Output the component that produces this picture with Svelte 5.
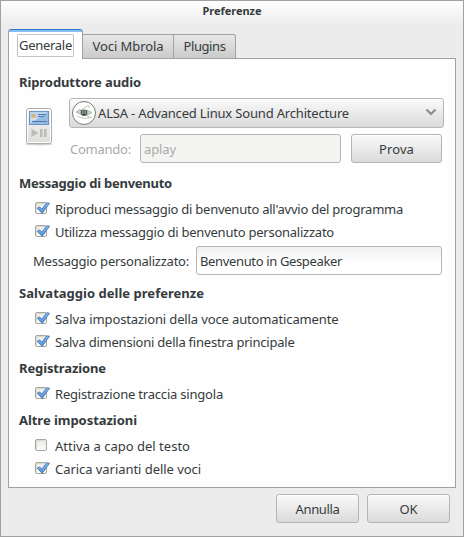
<script>
  const sections = [
    {
      title: 'Salvataggio delle preferenze', w: 185,
      items: [
        { label: 'Salva impostazioni della voce automaticamente', on: true, w: 283.5 },
        { label: 'Salva dimensioni della finestra principale', on: true, w: 239.5 }
      ]
    },
    {
      title: 'Registrazione', w: 87,
      items: [{ label: 'Registrazione traccia singola', on: true, w: 168 }]
    },
    {
      title: 'Altre impostazioni', w: 118,
      items: [
        { label: 'Attiva a capo del testo', on: false, w: 135 },
        { label: 'Carica varianti delle voci', on: true, w: 146 }
      ]
    }
  ];
  const welcome = [
    { label: "Riproduci messaggio di benvenuto all'avvio del programma", on: true, w: 348 },
    { label: 'Utilizza messaggio di benvenuto personalizzato', on: true, w: 279 }
  ];

  // Adjusts tracking so that a label occupies its allotted width.
  function track(node, width) {
    const natural = node.getBoundingClientRect().width;
    node.style.letterSpacing = `${(width - natural) / node.textContent.length}px`;
  }
</script>

{#snippet check(item)}
  <label class="check">
    <svg width="16" height="16" viewBox="0 0 16 16">
      <rect x="1.5" y="1.5" width="11" height="11" rx="1.5" fill="url(#box)" stroke="#a5a69d" />
      <path d="M2.5 11V3.5Q2.5 2.5 3.5 2.5H12" fill="none" stroke="#d9dad4" />
      {#if item.on}
        <path d="M3.2 7.2 5.6 5.9 7.9 8.2 12.7 1.8 15.5 2.2 8.2 12.4Z" fill="url(#tick)" stroke="#356ca9" stroke-width=".8" stroke-linejoin="round" />
      {/if}
    </svg>
    <span use:track={item.w}>{item.label}</span>
  </label>
{/snippet}

<svg class="defs" width="0" height="0">
  <defs>
    <linearGradient id="box" x2="0" y2="1"><stop stop-color="#e6e6e2" /><stop offset="1" stop-color="#fff" /></linearGradient>
    <linearGradient id="tick" x2="0" y2="1"><stop stop-color="#8abaf0" /><stop offset="1" stop-color="#5294dc" /></linearGradient>
  </defs>
</svg>

<div class="window">
  <header><span use:track={59}>Preferenze</span></header>
  <nav>
    <div class="tab active"><div class="focus"><span use:track={53}>Generale</span></div></div>
    <div class="tab voices"><span use:track={71}>Voci Mbrola</span></div>
    <div class="tab plugins"><span use:track={42}>Plugins</span></div>
  </nav>
  <main>
    <h2><span use:track={122}>Riproduttore audio</span></h2>
    <div class="audio">
      <svg class="player" width="30" height="40" viewBox="0 0 30 40">
        <defs>
          <linearGradient id="body" x2="0" y2="1"><stop stop-color="#f5f5f4" /><stop offset="1" stop-color="#dededc" /></linearGradient>
        </defs>
        <ellipse cx="15" cy="37" rx="14" ry="1.5" fill="#000" opacity=".18" />
        <rect x="2.5" y="1.5" width="25" height="35" rx="2.5" fill="url(#body)" stroke="#adafab" />
        <rect x="3.5" y="2.5" width="23" height="33" rx="1.5" fill="none" stroke="#fff" />
        <rect x="5.5" y="4.5" width="19" height="13" fill="#95bce5" stroke="#6c94c3" />
        <path d="M6 17V5H24Z" fill="#b9d5f1" />
        <path d="M7.5 7h4v3.5h-4z" fill="#d6b07a" /><path d="M7 11h5v2H7z" fill="#e5e1cc" />
        <path d="M14 7.5h8M14 9.5h6M8 14.5h15" stroke="#4c79ac" />
        <path d="M7.5 22v8l7-4zM16 22h2.5v8H16zM20 22h2.5v8H20z" fill="#babcb7" />
      </svg>
      <div class="controls">
        <div class="combo">
          <svg width="26" height="26" viewBox="0 0 26 26">
            <circle cx="13" cy="13" r="11.5" fill="#fff" stroke="#737a73" />
            <path d="M5 12Q12 7 21 12.5Q14 18 5 12Z" fill="#c5dbc5" stroke="#8ea594" stroke-width=".7" />
            <path d="M8 9Q13 15 20 18M6 16Q13 20 21 17M12 9Q19 3 18 8" fill="none" stroke="#a0aea1" stroke-width=".7" />
            <path d="M9.8 10.3h6.4v3.2Q15.5 16 13 16T9.8 13.5Z" fill="#4b554d" />
            <path d="M11.8 11v3M14.2 11v3" stroke="#d1ddd2" stroke-width=".8" />
          </svg>
          <span use:track={251}>ALSA - Advanced Linux Sound Architecture</span>
          <svg class="chev" width="12" height="10" viewBox="0 0 12 10"><path d="M1.5 1.5 6 6 10.5 1.5" fill="none" stroke="#8b8d89" stroke-width="2.2" /></svg>
        </div>
        <div class="command">
          <div class="dim"><span use:track={61}>Comando:</span></div>
          <div class="entry disabled"><span use:track={32}>aplay</span></div>
          <button class="test"><span use:track={35}>Prova</span></button>
        </div>
      </div>
    </div>

    <h2><span use:track={153}>Messaggio di benvenuto</span></h2>
    {#each welcome as item}{@render check(item)}{/each}
    <div class="custom">
      <div class="name"><span use:track={156}>Messaggio personalizzato:</span></div>
      <div class="entry"><span use:track={142}>Benvenuto in Gespeaker</span></div>
    </div>
    {#each sections as section}
      <h2><span use:track={section.w}>{section.title}</span></h2>
      {#each section.items as item}{@render check(item)}{/each}
    {/each}
  </main>
  <footer>
    <button><span use:track={44}>Annulla</span></button>
    <button><span use:track={18}>OK</span></button>
  </footer>
</div>

<style>
  .defs { position: absolute; }
  .window, .window * { box-sizing: border-box; }
  .window {
    width: 464px; height: 537px; border: 1px solid #a1a1a1;
    background: linear-gradient(#fff, #ececec 24px);
    font: 13px/18px "Noto Sans", "Open Sans", sans-serif; color: #353b3d;
    display: flex; flex-direction: column; white-space: nowrap; overflow: hidden;
  }
  span { display: inline-block; flex: none; }
  header { height: 28px; padding-top: 1px; text-align: center; font-weight: 700; font-size: 11px; }
  nav { display: flex; align-items: flex-end; height: 30px; padding-left: 7px; margin-bottom: -1px; position: relative; }
  .tab {
    height: 25px; display: flex; align-items: center; justify-content: center; padding-bottom: 1px;
    border: 1px solid #a1a1a1; border-left: 0; background: linear-gradient(#e7e7e7, #cbcbcb);
  }
  .active {
    width: 75px; height: 30px; border: 1px solid #a1a1a1; border-top: 0; border-bottom: 0;
    border-radius: 3px 3px 0 0; background: linear-gradient(#2a76c6 1px, #86bdf2 1px 3px, #fff 3px);
    padding: 2px 0 0;
  }
  .focus { width: 57px; height: 23px; border: 1px solid #c4c4c4; border-radius: 1px; display: flex; align-items: center; justify-content: center; }
  .voices { width: 91px; }
  .plugins { width: 62px; border-radius: 0 3px 0 0; }
  main { height: 430px; width: 448px; margin-left: 7px; padding: 8px 0 0 10px; border: 1px solid #a1a1a1; background: #fefefe; }
  h2 { margin: 0; height: 29px; padding: 6px 0 0; font-size: 13px; line-height: 18px; font-weight: 700; }
  .audio { height: 72px; display: flex; padding-top: 2px; }
  .player { margin: 9px 10px 0 5px; flex: none; }
  .controls { margin-left: 5px; display: flex; flex-direction: column; gap: 6px; }
  .combo, button { border: 1px solid #b5b5b5; border-radius: 3px; background: linear-gradient(#fafafa, #dadada); box-shadow: inset 0 1px #fff; color: inherit; }
  .combo { width: 375px; height: 30px; display: flex; align-items: center; padding: 0 6px 0 1px; gap: 1px; }
  .chev { margin-left: auto; }
  .command { display: flex; align-items: center; }
  .dim { width: 71px; padding-left: 1px; color: #a9abaa; }
  .entry { height: 29px; border: 1px solid #b5b5b5; border-radius: 3px; padding: 5px 3px; background: linear-gradient(#f0f0f0, #fff 16px); flex: none; width: 246px; }
  .disabled { width: 201px; background: #f4f4f2; color: #a9abaa; }
  button { width: 83px; height: 29px; padding: 0; font: inherit; }
  .test { width: 91px; margin-left: 10px; }
  .check { height: 23px; display: flex; align-items: center; padding-left: 15px; gap: 5px; }
  .check svg { flex: none; }
  .custom { height: 35px; display: flex; align-items: center; }
  .name { width: 177px; padding-left: 14px; }
  footer { display: flex; justify-content: flex-end; gap: 8px; padding: 6px 13px 0 0; }
</style>
